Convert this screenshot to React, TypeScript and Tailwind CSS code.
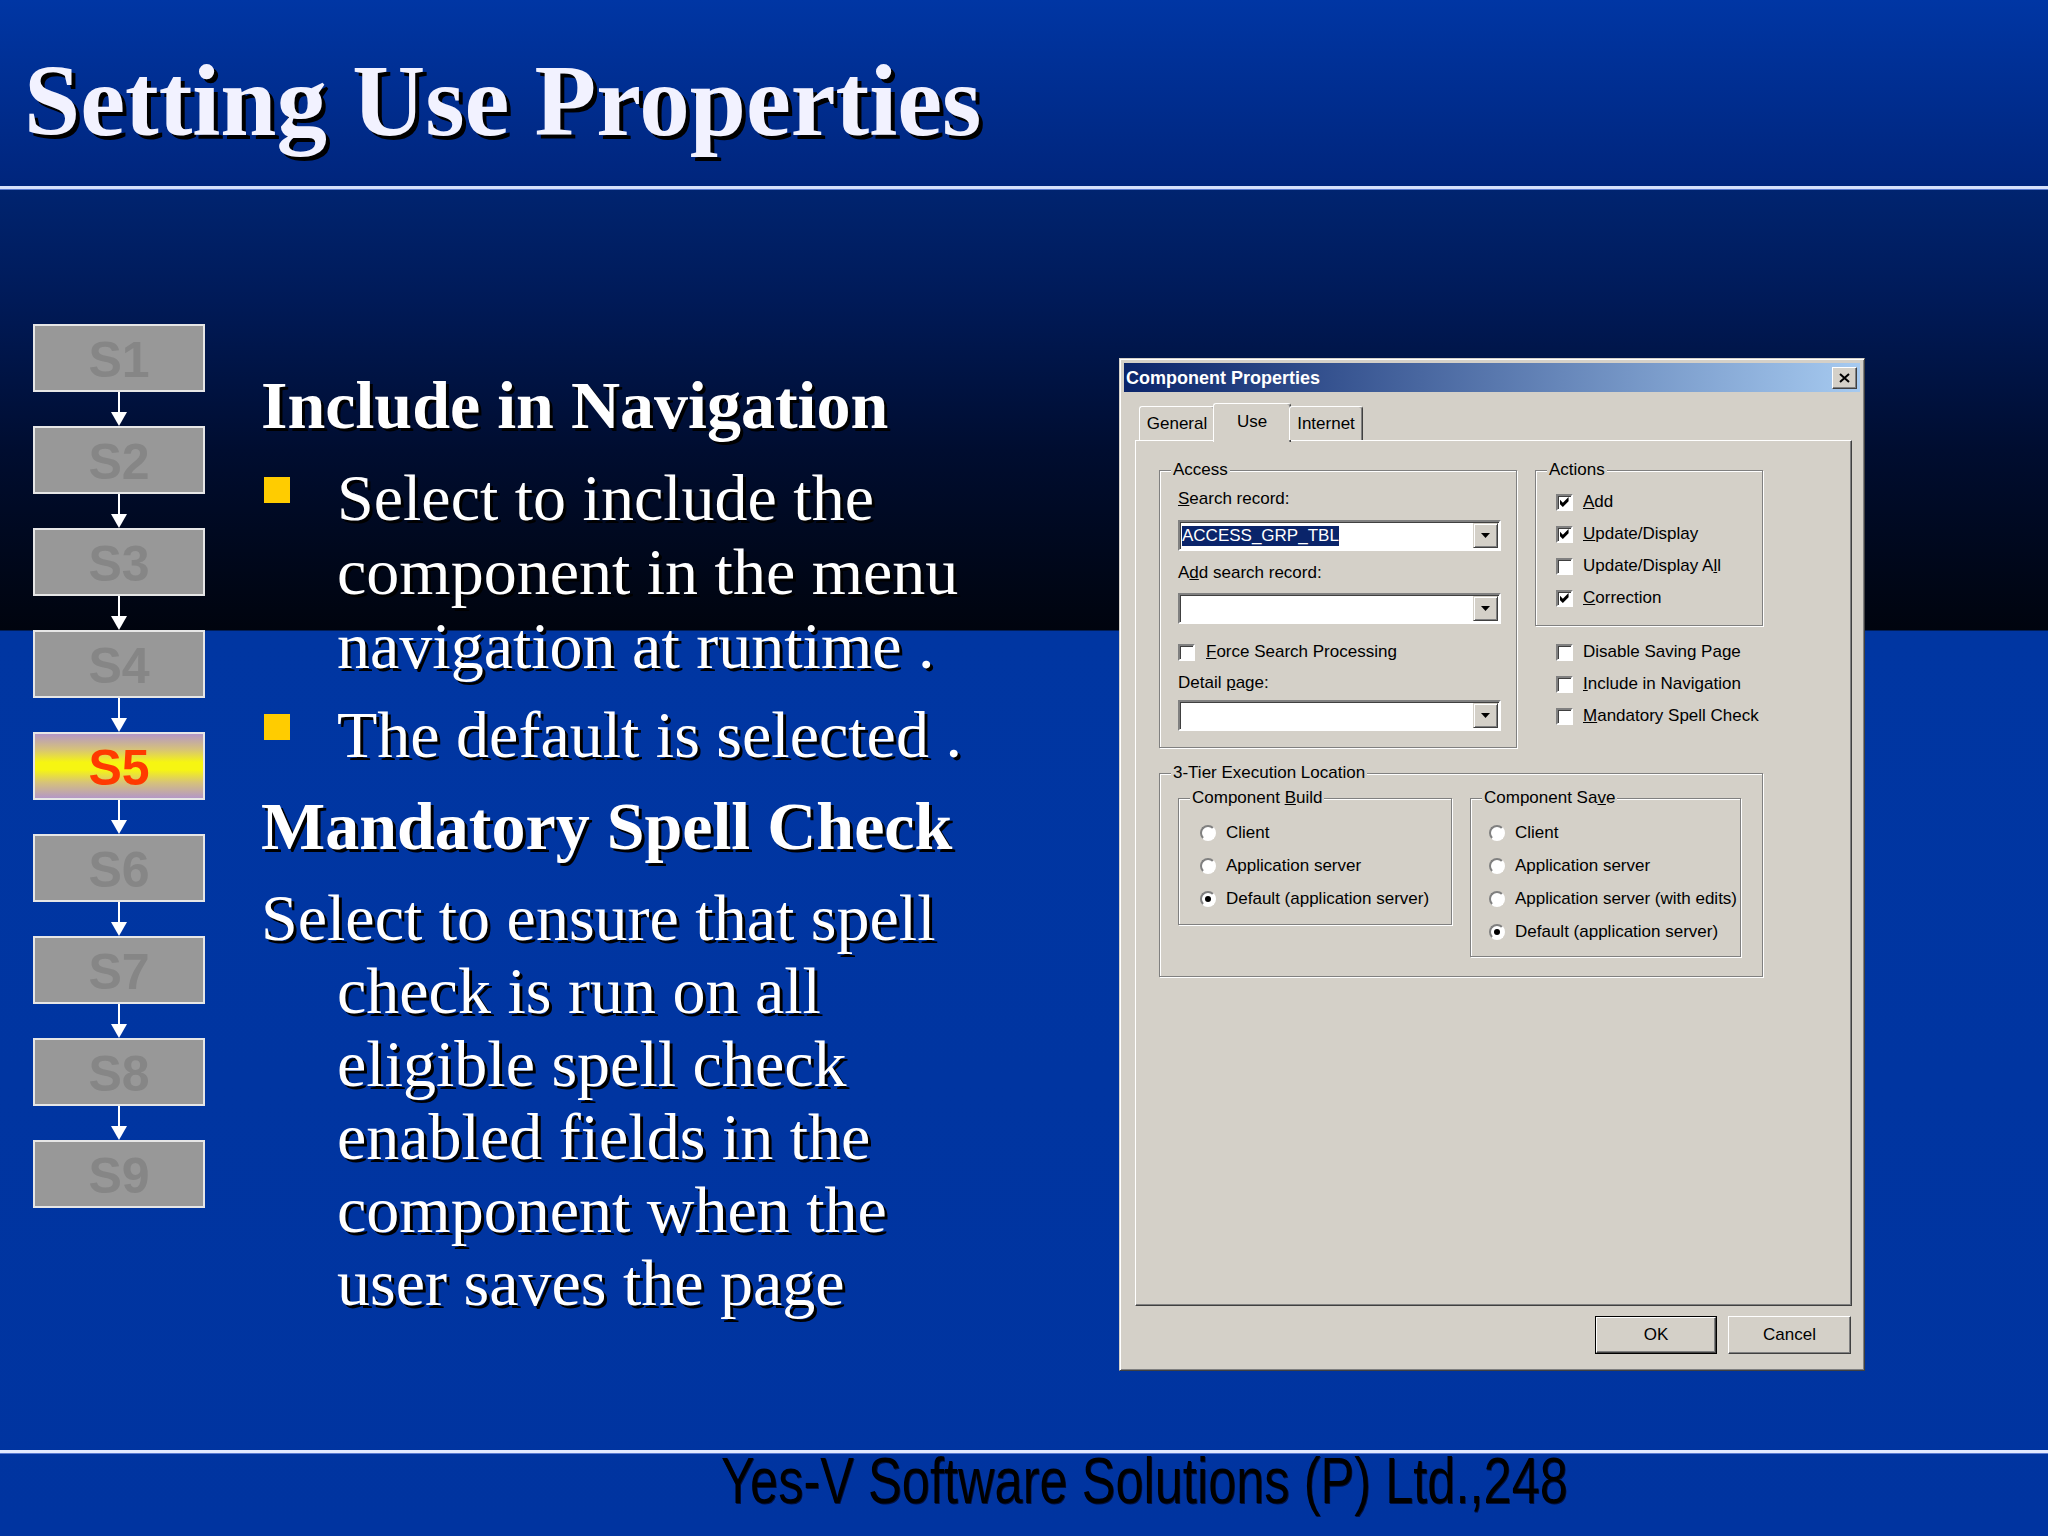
import React from 'react';

const STEPS = ['S1', 'S2', 'S3', 'S4', 'S5', 'S6', 'S7', 'S8', 'S9'];

function Arrow() {
  return (
    <svg width="20" height="34" viewBox="0 0 20 34" className="block">
      <line x1="10" y1="0" x2="10" y2="22" stroke="#ffffff" strokeWidth="2" />
      <polygon points="2,20 18,20 10,34" fill="#ffffff" />
    </svg>
  );
}

function StepColumn() {
  return (
    <div className="ml-[33px] mt-[135px] flex w-[172px] flex-col items-center">
      {STEPS.map((s, i) => (
        <React.Fragment key={s}>
          {i > 0 && <Arrow />}
          <div
            className={`flex h-[68px] w-[172px] items-center justify-center border-2 border-[#e6e6e6] pt-[4px] font-['Liberation_Sans',Arial,sans-serif] text-[50px] font-bold leading-none ${
              s === 'S5'
                ? 'bg-[linear-gradient(180deg,#b497c6_0%,#d6c27a_24%,#f6f512_44%,#f6f512_56%,#d6c27a_76%,#b497c6_100%)] text-[#ff3a00]'
                : 'bg-[#989898] text-[#868686]'
            }`}
          >
            {s}
          </div>
        </React.Fragment>
      ))}
    </div>
  );
}

function Bullet() {
  return <span className="ml-[3px] mt-[16px] h-[26px] w-[26px] shrink-0 bg-[#ffcc00]" />;
}

function TextColumn() {
  return (
    <div className="ml-[56px] mt-[176px] w-[858px] whitespace-nowrap font-['Liberation_Serif','Times_New_Roman',serif] text-white [text-shadow:3px_3px_0_#000000]">
      <h2 className="text-[68px] font-bold leading-[80px]">Include in Navigation</h2>
      <div className="mt-[16px] flex">
        <Bullet />
        <div className="ml-[47px] text-[66px] leading-[74px]">
          <div>Select to include the</div>
          <div>component in the menu</div>
          <div>navigation at runtime .</div>
        </div>
      </div>
      <div className="mt-[15px] flex">
        <Bullet />
        <div className="ml-[47px] text-[66px] leading-[74px]">The default is selected .</div>
      </div>
      <h2 className="mt-[14px] text-[68px] font-bold leading-[80px]">Mandatory Spell Check</h2>
      <div className="mt-[15px] text-[66px] leading-[73px]">
        <div>Select to ensure that spell</div>
        <div className="pl-[76px]">check is run on all</div>
        <div className="pl-[76px]">eligible spell check</div>
        <div className="pl-[76px]">enabled fields in the</div>
        <div className="pl-[76px]">component when the</div>
        <div className="pl-[76px]">user saves the page</div>
      </div>
    </div>
  );
}

function CheckBox({ checked }: { checked?: boolean }) {
  return (
    <span className="flex h-[17px] w-[17px] shrink-0 items-center justify-center border-2 border-t-[#808080] border-l-[#808080] border-r-white border-b-white bg-white shadow-[inset_1px_1px_0_#404040]">
      {checked && (
        <svg width="10" height="10" viewBox="0 0 7 7">
          <path d="M0 2 L2 4 L6 0 L6 3 L2 7 L0 5 Z" fill="#000000" />
        </svg>
      )}
    </span>
  );
}

function CheckRow({ checked, children, gap = 'gap-[10px]' }: { checked?: boolean; children: React.ReactNode; gap?: string }) {
  return (
    <div className={`flex h-[20px] items-center ${gap}`}>
      <CheckBox checked={checked} />
      <span>{children}</span>
    </div>
  );
}

function Radio({ selected }: { selected?: boolean }) {
  return (
    <span className="flex h-[16px] w-[16px] shrink-0 items-center justify-center rounded-full border-2 border-t-[#808080] border-l-[#808080] border-r-white border-b-white bg-white">
      {selected && <span className="h-[6px] w-[6px] rounded-full bg-black" />}
    </span>
  );
}

function RadioRow({ selected, children }: { selected?: boolean; children: React.ReactNode }) {
  return (
    <div className="flex h-[20px] items-center gap-[10px]">
      <Radio selected={selected} />
      <span>{children}</span>
    </div>
  );
}

function Combo({ value }: { value?: string }) {
  return (
    <div className="flex h-[31px] w-[323px] items-stretch border-2 border-t-[#808080] border-l-[#808080] border-r-white border-b-white bg-white shadow-[inset_1px_1px_0_#404040]">
      <div className="flex flex-1 items-center pl-[2px]">
        {value && <span className="bg-[#0a246a] text-white">{value}</span>}
      </div>
      <div className="m-[1px] flex w-[25px] items-center justify-center border border-t-[#d4d0c8] border-l-[#d4d0c8] border-r-[#404040] border-b-[#404040] bg-[#d4d0c8] shadow-[inset_1px_1px_0_#ffffff,inset_-1px_-1px_0_#808080]">
        <svg width="9" height="5" viewBox="0 0 9 5">
          <polygon points="0,0 9,0 4.5,5" fill="#000000" />
        </svg>
      </div>
    </div>
  );
}

// etched group box; padding goes on the inner div so the legend keeps its own offset
function Group({ title, className, inner, children }: { title: React.ReactNode; className: string; inner: string; children: React.ReactNode }) {
  return (
    <fieldset className={`border border-[#808080] shadow-[1px_1px_0_#ffffff,inset_1px_1px_0_#ffffff] ${className}`}>
      <legend className="ml-[11px] bg-[#d4d0c8] px-[2px]">{title}</legend>
      <div className={inner}>{children}</div>
    </fieldset>
  );
}

function Tab({ label, selected, w }: { label: string; selected?: boolean; w: string }) {
  return (
    <div
      className={`flex items-center justify-center rounded-t-[3px] border-t border-l border-r border-t-white border-l-white border-r-[#404040] bg-[#d4d0c8] shadow-[inset_-1px_0_0_#808080] ${w} ${
        selected ? '-mx-[2px] -mb-[2px] h-[39px] pb-[2px]' : 'h-[34px]'
      }`}
    >
      {label}
    </div>
  );
}

function WinButton({ label, primary }: { label: string; primary?: boolean }) {
  return (
    <div className={`h-[38px] ${primary ? 'w-[122px] border border-black' : 'w-[123px]'}`}>
      <div className="flex h-full w-full items-center justify-center border border-t-white border-l-white border-r-[#404040] border-b-[#404040] shadow-[inset_-1px_-1px_0_#808080]">
        {label}
      </div>
    </div>
  );
}

function Dialog() {
  return (
    <div className="mt-[169px] flex h-[1013px] w-[746px] flex-col border border-t-[#d4d0c8] border-l-[#d4d0c8] border-r-[#404040] border-b-[#404040] bg-[#d4d0c8] p-[4px] font-['Liberation_Sans',Arial,sans-serif] text-[17px] leading-[20px] text-black shadow-[inset_1px_1px_0_#ffffff,inset_-1px_-1px_0_#808080]">
      {/* title bar */}
      <div className="flex h-[29px] items-center justify-between bg-[linear-gradient(to_right,#0a246a,#a6caf0)] pl-[2px] pr-[3px]">
        <span className="text-[18px] font-bold text-white">Component Properties</span>
        <div className="flex h-[22px] w-[25px] items-center justify-center border border-t-white border-l-white border-r-[#404040] border-b-[#404040] bg-[#d4d0c8] shadow-[inset_-1px_-1px_0_#808080]">
          <svg width="11" height="10" viewBox="0 0 11 10">
            <path d="M1 1 L10 9 M10 1 L1 9" stroke="#000000" strokeWidth="2" />
          </svg>
        </div>
      </div>

      <div className="flex flex-1 flex-col pl-[11px] pr-[8px]">
        {/* tabs */}
        <div className="relative z-10 mt-[11px] flex h-[37px] items-end pl-[4px]">
          <Tab label="General" w="w-[76px]" />
          <Tab label="Use" selected w="w-[78px]" />
          <Tab label="Internet" w="w-[74px]" />
        </div>

        {/* tab panel */}
        <div className="h-[866px] border border-t-white border-l-white border-r-[#404040] border-b-[#404040] pl-[23px] pt-[19px] shadow-[inset_-1px_-1px_0_#808080]">
          <div className="flex items-start gap-[18px]">
            <Group title="Access" className="w-[358px]" inner="pb-[16px] pl-[18px] pt-[9px]">
              <div>
                <u className="underline">S</u>earch record:
              </div>
              <div className="mt-[11px]">
                <Combo value="ACCESS_GRP_TBL" />
              </div>
              <div className="mt-[12px]">
                A<u className="underline">d</u>d search record:
              </div>
              <div className="mt-[10px]">
                <Combo />
              </div>
              <div className="mt-[18px]">
                <CheckRow gap="gap-[11px]">
                  <u className="underline">F</u>orce Search Processing
                </CheckRow>
              </div>
              <div className="mt-[11px]">
                Detail <u className="underline">p</u>age:
              </div>
              <div className="mt-[7px]">
                <Combo />
              </div>
            </Group>

            <div className="w-[228px]">
              <Group title="Actions" className="w-[228px]" inner="flex flex-col gap-[12px] pb-[17px] pl-[20px] pt-[12px]">
                <CheckRow checked>
                  <u className="underline">A</u>dd
                </CheckRow>
                <CheckRow checked>
                  <u className="underline">U</u>pdate/Display
                </CheckRow>
                <CheckRow>
                  Update/Display A<u className="underline">l</u>l
                </CheckRow>
                <CheckRow checked>
                  <u className="underline">C</u>orrection
                </CheckRow>
              </Group>
              <div className="mt-[16px] flex flex-col gap-[12px] pl-[21px]">
                <CheckRow>Disable Saving Page</CheckRow>
                <CheckRow>
                  <u className="underline">I</u>nclude in Navigation
                </CheckRow>
                <CheckRow>
                  <u className="underline">M</u>andatory Spell Check
                </CheckRow>
              </div>
            </div>
          </div>

          <Group title="3-Tier Execution Location" className="mt-[15px] w-[604px]" inner="flex items-start gap-[18px] pb-[19px] pl-[18px] pt-[5px]">
            <Group
              title={
                <>
                  Component <u className="underline">B</u>uild
                </>
              }
              className="w-[274px]"
              inner="flex flex-col gap-[13px] pb-[15px] pl-[21px] pt-[15px]"
            >
              <RadioRow>Client</RadioRow>
              <RadioRow>Application server</RadioRow>
              <RadioRow selected>Default (application server)</RadioRow>
            </Group>
            <Group
              title={
                <>
                  Component Sa<u className="underline">v</u>e
                </>
              }
              className="w-[271px]"
              inner="flex flex-col gap-[13px] pb-[14px] pl-[18px] pt-[15px]"
            >
              <RadioRow>Client</RadioRow>
              <RadioRow>Application server</RadioRow>
              <RadioRow>Application server (with edits)</RadioRow>
              <RadioRow selected>Default (application server)</RadioRow>
            </Group>
          </Group>
        </div>

        {/* buttons */}
        <div className="mt-[10px] flex justify-end gap-[11px] pr-[1px]">
          <WinButton label="OK" primary />
          <WinButton label="Cancel" />
        </div>
      </div>
    </div>
  );
}

export default function App() {
  return (
    <div className="relative h-[1536px] w-[2048px] overflow-hidden bg-[linear-gradient(180deg,#0036a4_0px,#00257c_186px,#002470_189px,#001a58_300px,#000d30_450px,#00040e_630px,#0036a2_631px,#0034a0_1536px)]">
      <header className="h-[186px] pl-[24px] pt-[51px]">
        <h1 className="whitespace-nowrap font-['Liberation_Serif','Times_New_Roman',serif] text-[101px] font-bold leading-[100px] text-[#f2f2ff] [text-shadow:4px_4px_0_#000000]">
          Setting Use Properties
        </h1>
      </header>
      <div className="h-[3px] bg-[#d6e0fa] shadow-[0_1px_0_#5a7ad0]" />

      <main className="flex h-[1261px] items-start">
        <StepColumn />
        <TextColumn />
        <Dialog />
      </main>

      <div className="h-[3px] bg-[#e2e9ff] shadow-[0_1px_0_#5a7ad0]" />
      <footer className="pl-[721px]">
        <span className="inline-block origin-left scale-x-[0.79] whitespace-nowrap font-['Liberation_Sans',Arial,sans-serif] text-[64px] leading-[56px] text-black [text-shadow:1px_1px_0_#001040]">
          Yes-V Software Solutions (P) Ltd.,248
        </span>
      </footer>
    </div>
  );
}
